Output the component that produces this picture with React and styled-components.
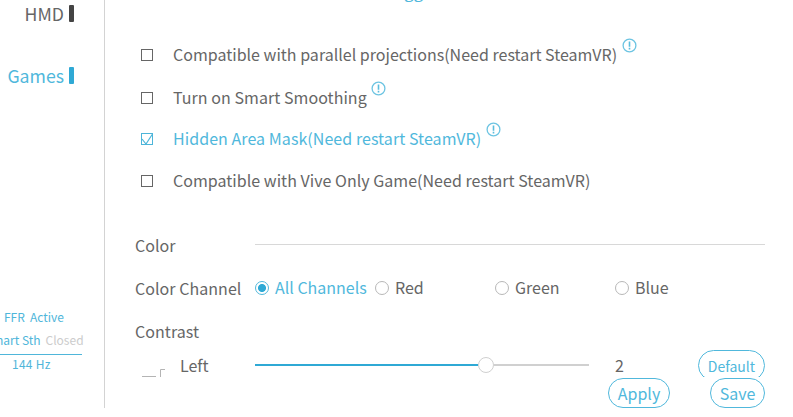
import React from "react"
import styled, { createGlobalStyle } from "styled-components"

const options = [
	{ label: "Compatible with parallel projections(Need restart SteamVR)", tip: true, height: 43, spacing: 0.01 },
	{ label: "Turn on Smart Smoothing", tip: true, height: 41, spacing: 0.05 },
	{ label: "Hidden Area Mask(Need restart SteamVR)", tip: true, checked: true, height: 42, spacing: 0.06 },
	{ label: "Compatible with Vive Only Game(Need restart SteamVR)", height: 42, spacing: 0.03 },
]

const channels = ["All Channels", "Red", "Green", "Blue"]

const InfoIcon = () => (
	<Info width="15" height="15" viewBox="0 0 15 15">
		<circle cx="7.5" cy="7.5" r="6.4" fill="none" stroke="#6cc4e2" strokeWidth="1.3" />
		<path d="M7.5 3.5v5.2M7.5 9.8v1.6" stroke="#5bbddd" strokeWidth="1.6" />
	</Info>
)

const App = () => {
	return (
		<Page>
			<GlobalStyle />
			<Sidebar>
				<NavItem>
					HMD
					<NavMark />
				</NavItem>
				<NavItem $active>
					Games
					<NavMark $active />
				</NavItem>
				<Status>
					<StatusLine>
						<span>FFR</span>
						<span>Active</span>
					</StatusLine>
					<StatusLine $clipped>
						<span>Smart Sth</span>
						<Closed>Closed</Closed>
					</StatusLine>
					<Frequency>144 Hz</Frequency>
				</Status>
			</Sidebar>
			<Main>
				<ScrolledLink>gg</ScrolledLink>
				<OptionList>
					{options.map((item) => (
						<Option key={item.label} $height={item.height} $checked={item.checked}>
							<Checkbox $checked={item.checked}>
								{item.checked && (
									<svg width="13" height="13" viewBox="0 0 13 13">
										<path d="M1 6l4 5L11.5 1" fill="none" stroke="#4db5d9" strokeWidth="1.2" />
									</svg>
								)}
							</Checkbox>
							<Label $spacing={item.spacing}>{item.label}</Label>
							{item.tip && <InfoIcon />}
						</Option>
					))}
				</OptionList>
				<Section>
					<Title>Color</Title>
					<Divider />
				</Section>
				<Section>
					<Title>Color Channel</Title>
					<Channels>
						{channels.map((name, i) => (
							<Channel key={name} $active={i === 0}>
								<Radio $active={i === 0} />
								{name}
							</Channel>
						))}
					</Channels>
				</Section>
				<Section>
					<Title>Contrast</Title>
				</Section>
				<SliderRow>
					<LinkMark width="24" height="10" viewBox="0 0 24 10">
						<path d="M1 8.5h14M19.5 9V1.5H24" fill="none" stroke="#b4b4b4" />
					</LinkMark>
					<Side>Left</Side>
					<Track>
						<Filled />
						<Knob />
						<Rest />
					</Track>
					<Value>2</Value>
					<DefaultClip>
						<Button $width={67} $height={31} $size={14}>Default</Button>
					</DefaultClip>
				</SliderRow>
				<Footer>
					<Button $width={62} $height={30} $size={16}>Apply</Button>
					<Button $width={55} $height={30} $size={16}>Save</Button>
				</Footer>
			</Main>
		</Page>
	)
}

const GlobalStyle = createGlobalStyle`
	* {
		box-sizing: border-box;
	}
	body {
		margin: 0;
		background: #fff;
		overflow: hidden;
	}
`

const Page = styled.div`
	width: 793px;
	height: 417px;
	display: flex;
	overflow: hidden;
	color: #666;
	font-family: "Noto Sans CJK SC", "Noto Sans", sans-serif;
	font-size: 16px;
	white-space: nowrap;
`

const Sidebar = styled.div`
	width: 105px;
	height: 408px;
	flex: none;
	display: flex;
	flex-direction: column;
	border-right: 1px solid #d3d3d3;
	overflow: hidden;
`

const NavItem = styled.div`
	height: 62px;
	flex: none;
	display: flex;
	justify-content: flex-end;
	padding-right: 30px;
	gap: 5px;
	font-size: 17.7px;
	line-height: 27px;
	color: ${(p) => (p.$active ? "#50b8dc" : "#666")};
`

const NavMark = styled.span`
	width: 5px;
	height: 17px;
	margin-top: 5px;
	border-radius: 1px;
	background: ${(p) => (p.$active ? "#2fa9d5" : "#444")};
`

const Status = styled.div`
	margin-top: 181px;
	font-size: 12px;
	color: #4fb6da;
`

const StatusLine = styled.div`
	height: 23px;
	line-height: 23px;
	display: flex;
	gap: 5px;
	padding-left: 4px;
	margin-left: ${(p) => (p.$clipped ? "-19px" : "0")};
`

const Closed = styled.span`
	color: #ccc;
`

const Frequency = styled.div`
	width: 82px;
	margin-top: 3px;
	padding-left: 12px;
	border-top: 1px solid #4fb6da;
	letter-spacing: 0.25px;
	line-height: 17px;
`

const Main = styled.div`
	flex: 1;
	min-width: 0;
	padding-left: 30px;
`

const ScrolledLink = styled.div`
	height: 34px;
	padding-left: 269px;
	margin-top: -26px;
	margin-bottom: 26px;
	line-height: 34px;
	color: #50b8dc;
	font-size: 17px;
`

const OptionList = styled.div`
	height: 190px;
`

const Option = styled.div`
	display: flex;
	height: ${(p) => p.$height}px;
	padding-left: 6px;
	line-height: 40px;
	color: ${(p) => (p.$checked ? "#50b8dc" : "#666")};
`

const Checkbox = styled.span`
	width: 12px;
	height: 12px;
	margin: 15px 20px 0 0;
	border: 1px solid ${(p) => (p.$checked ? "#4db5d9" : "#666")};

	svg {
		display: block;
		margin: -1px;
	}
`

const Label = styled.span`
	letter-spacing: ${(p) => p.$spacing}px;
`

const Info = styled.svg`
	margin: 4px 0 0 4.5px;
`

const Section = styled.div`
	height: 43px;
	display: flex;
	line-height: 43px;
`

const Title = styled.div`
	width: 120px;
	letter-spacing: 0.05px;
`

const Divider = styled.div`
	width: 510px;
	height: 1px;
	margin-top: 20px;
	background: #d8d8d8;
`

const Channels = styled.div`
	display: grid;
	grid-template-columns: repeat(4, 120px);
	line-height: 41px;
`

const Channel = styled.div`
	display: flex;
	gap: 6px;
	color: ${(p) => (p.$active ? "#50b8dc" : "#666")};
`

const Radio = styled.span`
	width: 14px;
	height: 14px;
	margin-top: 14px;
	border: 1px solid ${(p) => (p.$active ? "#50b8dc" : "#b8b8b8")};
	border-radius: 50%;
	background: ${(p) => (p.$active ? "radial-gradient(circle, #2fa9d5 3.6px, #fff 4.4px)" : "#fff")};
`

const SliderRow = styled.div`
	height: 25px;
	display: flex;
	align-items: flex-start;
	line-height: 25px;
`

const LinkMark = styled.svg`
	margin: 15px 15px 0 6px;
`

const Side = styled.div`
	width: 75px;
`

const Track = styled.div`
	width: 334px;
	height: 24px;
	display: flex;
	align-items: center;
`

const Filled = styled.div`
	width: 223px;
	height: 2px;
	background: #2fa9d5;
`

const Knob = styled.div`
	width: 16px;
	height: 16px;
	border: 1px solid #d0d0d0;
	border-radius: 50%;
	background: #fff;
`

const Rest = styled.div`
	flex: 1;
	height: 2px;
	background: #d0d0d0;
`

const Value = styled.div`
	width: 83px;
	padding-left: 26px;
	box-sizing: content-box;
`

const DefaultClip = styled.div`
	height: 27px;
	margin-top: -3px;
	overflow: hidden;
`

const Button = styled.button`
	display: flex;
	align-items: center;
	justify-content: center;
	width: ${(p) => p.$width}px;
	height: ${(p) => p.$height}px;
	padding: 0;
	border: 1px solid #50b8dc;
	border-radius: 16px;
	background: transparent;
	color: #50b8dc;
	font-family: inherit;
	font-size: ${(p) => p.$size}px;
	line-height: 20px;
`

const Footer = styled.div`
	display: flex;
	gap: 40px;
	padding-left: 473px;
`

export default App
